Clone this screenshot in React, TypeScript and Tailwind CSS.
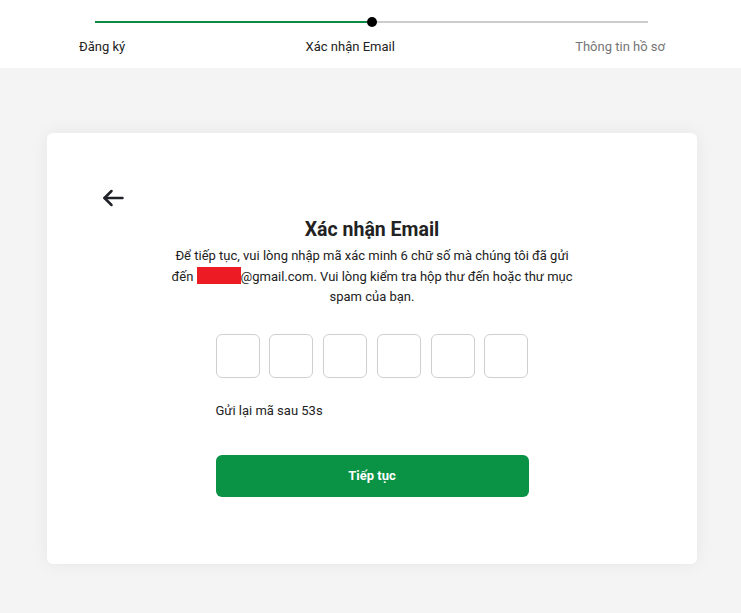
const steps = [
  { label: "Đăng ký", active: true },
  { label: "Xác nhận Email", active: true },
  { label: "Thông tin hồ sơ", active: false },
];

function Stepper() {
  return (
    <div className="h-[68px] bg-white">
      <div className="relative ml-[95px] mr-[93px] pt-[21px]">
        <div className="flex h-[2px]">
          <div className="w-[277px] bg-[#0b8a43]" />
          <div className="flex-1 bg-[#cccccc]" />
        </div>
        <div className="absolute left-[272px] top-[17px] h-[10px] w-[10px] rounded-full bg-black" />
      </div>
      <div className="ml-[79px] mr-[76px] mt-[15px] flex justify-between text-[13px] leading-[18px]">
        {steps.map((s) => (
          <span key={s.label} className={s.active ? "text-[#222]" : "text-[#757575]"}>
            {s.label}
          </span>
        ))}
      </div>
    </div>
  );
}

export default function App() {
  return (
    <div className="min-h-screen bg-[#f4f4f4]" style={{ fontFamily: "Roboto, 'Noto Sans', sans-serif" }}>
      <Stepper />
      <div className="pt-[65px] pb-[49px]">
        <div className="ml-[47px] w-[650px] rounded-md bg-white px-[55px] pt-[55px] pb-[67px] shadow-[0_0_18px_rgba(0,0,0,0.06)]">
          {/* Back */}
          <button className="block h-[20px] text-[#1f2328]">
            <svg width="22" height="20" viewBox="0 0 22 20" fill="none" stroke="currentColor" strokeWidth="2.5" strokeLinecap="round" strokeLinejoin="round">
              <path d="M20.5 10H2.5" />
              <path d="M9.5 3L2.5 10L9.5 17" />
            </svg>
          </button>

          <div className="mx-auto w-[313px]">
            <h1 className="-mx-[60px] mt-[9px] text-center text-[19.5px] font-bold leading-[25px] text-[#222]">
              Xác nhận Email
            </h1>
            <p className="-mx-[46px] mt-[4px] text-center text-[13px] leading-[20.5px] text-[#222]">
              Để tiếp tục, vui lòng nhập mã xác minh 6 chữ số mà chúng tôi đã gửi đến{" "}
              <span className="inline-block h-[17px] w-[44px] bg-[#ed1c24] align-[-3px]" />
              @gmail.com. Vui lòng kiểm tra hộp thư đến hoặc thư mục spam của bạn.
            </p>

            {/* OTP */}
            <div className="mt-[26px] flex justify-between">
              {[0, 1, 2, 3, 4, 5].map((i) => (
                <input
                  key={i}
                  maxLength={1}
                  className="h-[44px] w-[44px] rounded-md border border-[#cfcfcf] bg-white text-center text-lg outline-none"
                />
              ))}
            </div>

            <p className="mt-[23px] text-[13px] leading-[20px] text-[#222]">Gửi lại mã sau 53s</p>

            <button className="mt-[34px] h-[42px] w-full rounded-md bg-[#0a9245] text-[13px] font-bold text-white">
              Tiếp tục
            </button>
          </div>
        </div>
      </div>
    </div>
  );
}
